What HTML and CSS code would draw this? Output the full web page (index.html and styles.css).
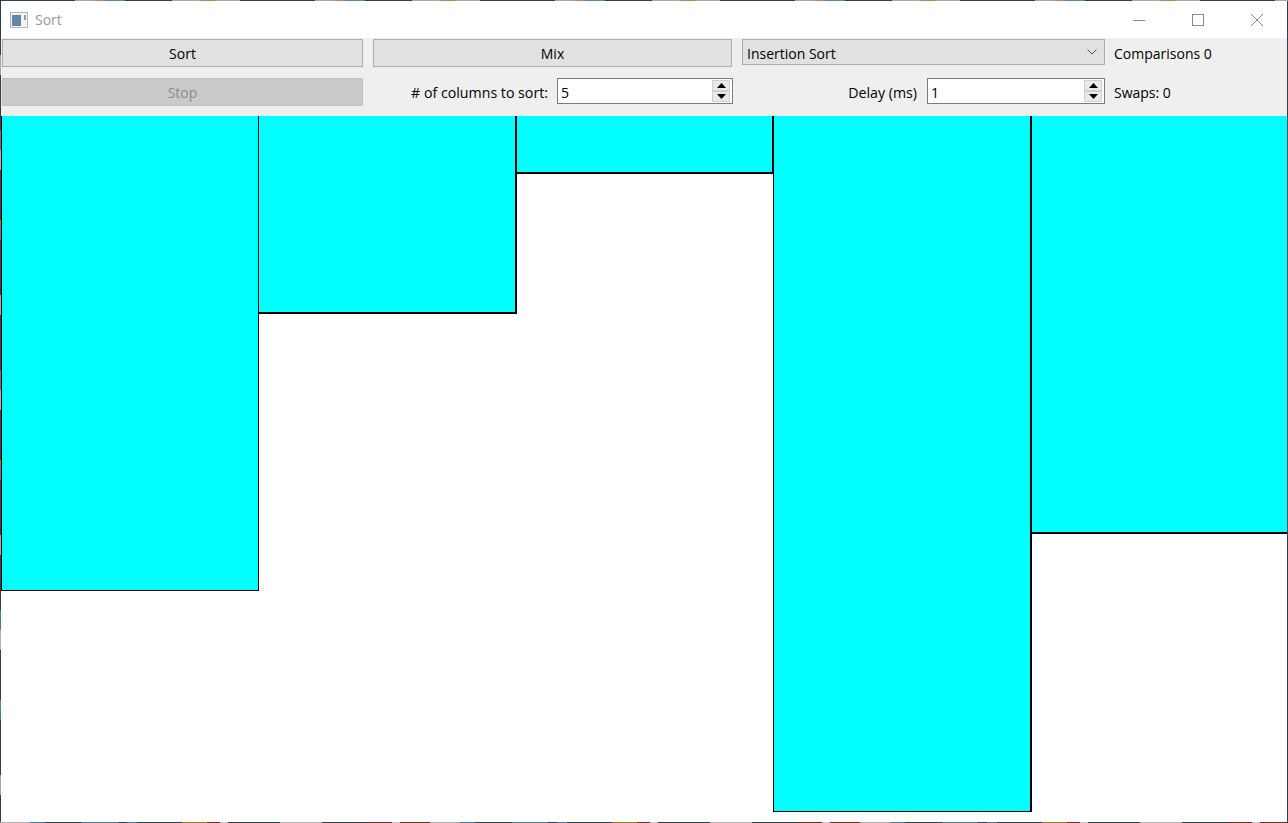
FILE: index.html
```html
<!DOCTYPE html>
<html lang="en">
<head>
<meta charset="utf-8">
<title>Sort</title>
<link rel="stylesheet" href="styles.css">
</head>
<body>
<div class="window">
  <header class="titlebar">
    <svg class="app-icon" width="18" height="17" viewBox="0 0 18 17">
      <rect x="0.5" y="0.5" width="17" height="15" fill="#f4f4f4" stroke="#b4b4b4"/>
      <rect x="2" y="3" width="9" height="11" fill="#6486a4"/>
      <rect x="14" y="3" width="2" height="5" fill="#8aa3b8"/>
    </svg>
    <span class="title">Sort</span>
    <div class="controls">
      <svg width="12" height="12" viewBox="0 0 12 12"><path d="M0 6.5H12" stroke="#8a8a8a"/></svg>
      <svg width="12" height="12" viewBox="0 0 12 12"><rect x="0.5" y="0.5" width="11" height="11" fill="none" stroke="#8a8a8a"/></svg>
      <svg width="12" height="12" viewBox="0 0 12 12"><path d="M0 0L12 12M12 0L0 12" stroke="#8a8a8a"/></svg>
    </div>
  </header>
  <section class="toolbar">
    <button class="btn">Sort</button>
    <button class="btn">Mix</button>
    <div class="combo"><span class="combo-value">Insertion Sort</span>
      <svg width="10" height="6" viewBox="0 0 10 6"><path d="M0.5 0.5L5 5L9.5 0.5" fill="none" stroke="#555"/></svg>
    </div>
    <span class="stat">Comparisons 0</span>
    <button class="btn btn-disabled" disabled>Stop</button>
    <div class="field">
      <label class="field-label">#&nbsp;of columns to sort:</label>
      <div class="spin spin-columns"><span class="spin-value">5</span>
        <div class="spin-btns">
          <span class="spin-btn"><svg width="9" height="5" viewBox="0 0 9 5"><path d="M4.5 0L9 5H0Z" fill="#000"/></svg></span>
          <span class="spin-btn"><svg width="9" height="5" viewBox="0 0 9 5"><path d="M0 0H9L4.5 5Z" fill="#000"/></svg></span>
        </div>
      </div>
    </div>
    <div class="field field-delay">
      <label class="field-label">Delay (ms)</label>
      <div class="spin spin-delay"><span class="spin-value">1</span>
        <div class="spin-btns">
          <span class="spin-btn"><svg width="9" height="5" viewBox="0 0 9 5"><path d="M4.5 0L9 5H0Z" fill="#000"/></svg></span>
          <span class="spin-btn"><svg width="9" height="5" viewBox="0 0 9 5"><path d="M0 0H9L4.5 5Z" fill="#000"/></svg></span>
        </div>
      </div>
    </div>
    <span class="stat">Swaps: 0</span>
  </section>
  <main class="chart">
    <div class="bar bar-a" style="height:475px"></div>
    <div class="bar bar-b" style="height:198px"></div>
    <div class="bar bar-c" style="height:58px"></div>
    <div class="bar bar-d" style="height:696px"></div>
    <div class="bar bar-e" style="height:418px"></div>
  </main>
</div>
</body>
</html>
```
FILE: styles.css
```css
* { box-sizing: border-box; }
html, body { margin: 0; height: 100%; }
body {
  background-color: #2b4054;
  background-image:
    linear-gradient(90deg, #b0b0b0 0 30px, #4a7a9c 30px 45px, #2c3e50 45px 82px, #56799a 82px 118px, #2c3e50 118px 127px, #56799a 127px 137px, #2c3e50 137px 182px, #a5763a 182px 207px, #6b2f20 207px 220px, #c8c8c8 220px 228px, #2c3e50 228px 280px, #b4b4b4 280px 322px, #2c3e50 322px 368px, #6b2f20 368px 392px, #c8c8c8 392px 400px, #6b2f20 400px 430px),
    linear-gradient(90deg, #2c3e50 0 75px, #a8a8a8 75px 95px, #b58a50 95px 105px, #5a86a8 105px 125px, #2c3e50 125px 172px, #a8a8a8 172px 200px, #b58a50 200px 215px, #a8a8a8 215px 240px),
    linear-gradient(180deg, #4a7a9c 0 20px, #b0b0b0 20px 40px, #2c3e50 40px 90px, #a5763a 90px 96px, #4a7a9c 96px 110px, #2c3e50 110px 165px, #a8a8a8 165px 185px, #2c3e50 185px 240px);
  background-repeat: repeat-x, repeat-x, repeat-y;
  background-size: 430px 1px, 240px 1px, 1px 240px;
  background-position: 0 822px, 0 0, 0 610px;
  overflow: hidden;
  font-family: "Open Sans", "Noto Sans", sans-serif;
  font-size: 14px;
  color: #000;
}
.window {
  margin: 1px 1px 0 1px;
  height: 821px;
  background: #fff;
  display: flex;
  flex-direction: column;
}
.titlebar {
  height: 37px;
  flex: none;
  display: flex;
  align-items: center;
  padding-left: 9px;
  background: #fff;
}
.app-icon { margin-right: 7px; margin-top: 1px; }
.title { color: #999; font-size: 14px; }
.controls {
  margin-left: auto;
  display: flex;
  gap: 47px;
  padding-right: 24px;
  margin-top: 1px;
}
.toolbar {
  height: 78px;
  flex: none;
  background: #efefef;
  display: grid;
  grid-template-columns: 361px 361px 363px 1fr;
  grid-template-rows: 28px 28px;
  column-gap: 9px;
  row-gap: 11px;
  padding: 1px 0 0 1px;
}
.btn {
  font: inherit;
  color: #000;
  height: 28px;
  padding: 0;
  background: #e1e1e1;
  border: 1px solid #adadad;
}
.btn-disabled {
  background: #cacaca;
  border-color: #bfbfbf;
  color: #8a8a8a;
}
.toolbar > .btn:nth-child(2) { margin-left: 1px; width: 359px; }
.combo {
  height: 26px;
  background: #e1e1e1;
  border: 1px solid #adadad;
  display: flex;
  align-items: center;
  justify-content: space-between;
  padding: 0 7px 0 4px;
}
.combo-value { padding-top: 2px; }
.stat { align-self: start; line-height: 28px; padding-top: 1px; }
.field {
  display: flex;
  justify-content: flex-end;
  gap: 9px;
  height: 26px;
  align-items: flex-start;
}
.field-delay { gap: 10px; }
.field-label { white-space: nowrap; line-height: 28px; padding-top: 1px; font-size: 14.2px; }
.spin {
  height: 26px;
  background: #fff;
  border: 1px solid #7a7a7a;
  display: flex;
  align-items: center;
  justify-content: space-between;
  padding: 0 2px 0 3px;
}
.spin-value { padding-top: 2px; }
.spin-columns { width: 176px; }
.spin-delay { width: 178px; }
.spin-btns { display: flex; flex-direction: column; width: 18px; height: 22px; }
.spin-btn {
  flex: 1;
  display: flex;
  align-items: center;
  justify-content: center;
  background: #e9e9e9;
  border: 1px solid #d0d0d0;
}
.chart {
  flex: 1;
  display: flex;
  align-items: flex-start;
  background: #fff;
}
.bar {
  background: #0ff;
  border-style: solid;
  border-color: #000;
  border-width: 0;
  flex: none;
}
.bar-a { width: 258px; border-width: 0 1px 1px 1px; }
.bar-b { width: 258px; border-width: 0 2px 2px 0; }
.bar-c { width: 256px; border-width: 0 1px 2px 0; }
.bar-d { width: 259px; border-width: 0 2px 1px 1px; }
.bar-e { width: 255px; border-width: 0 0 2px 0; }
```
